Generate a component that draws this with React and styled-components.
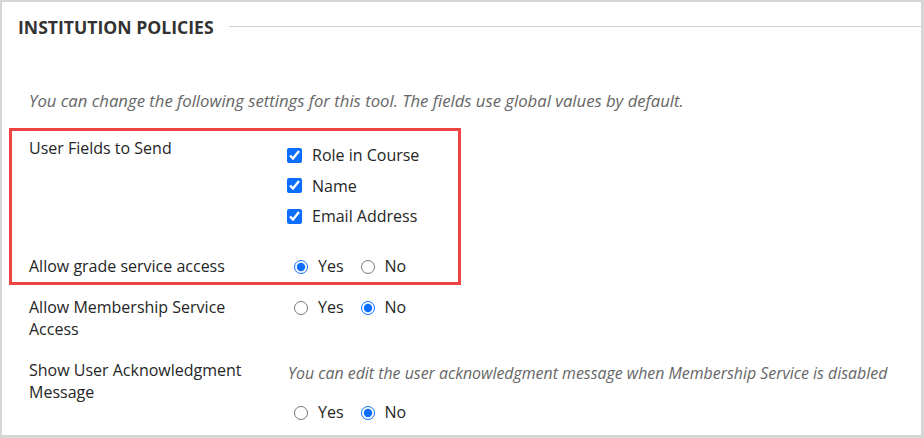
import React from "react";
import styled, { createGlobalStyle } from "styled-components";

const GlobalStyle = createGlobalStyle`
  html, body {
    margin: 0;
    padding: 0;
    background: #fff;
  }
  body {
    font-family: "Open Sans", "Noto Sans", sans-serif;
    color: #262626;
  }
`;

const Frame = styled.div`
  width: 924px;
  height: 438px;
  box-sizing: border-box;
  border: 2px solid #d6d6d6;
  border-bottom-width: 3px;
  border-right-width: 3px;
  overflow: hidden;
`;

const Header = styled.div`
  display: flex;
  align-items: center;
  padding: 13px 0 0 16px;
`;

const Title = styled.h2`
  margin: 0;
  font-size: 17.6px;
  line-height: 24px;
  font-weight: 700;
  color: #333;
`;

const Rule = styled.div`
  flex: 1;
  height: 1px;
  background: #cfcfcf;
  margin: -2px 0 0 15px;
`;

const Intro = styled.p`
  margin: 51px 0 0 27px;
  font-size: 16.7px;
  line-height: 22px;
  font-style: italic;
  color: #666;
  white-space: nowrap;
`;

const Highlight = styled.div`
  width: 452px;
  box-sizing: border-box;
  margin: 16px 0 0 7px;
  border: 3px solid #ef4444;
  padding: 6px 0 5px 17px;
`;

const Row = styled.div`
  display: grid;
  grid-template-columns: 258px 1fr;
  align-items: start;
  margin-top: ${(p) => p.$gap || 0}px;
  padding-left: ${(p) => p.$indent || 0}px;
`;

const Label = styled.div`
  font-size: 16px;
  line-height: 22px;
  color: #262626;
`;

const Controls = styled.div`
  display: flex;
  flex-direction: column;
  padding-top: ${(p) => p.$offset || 0}px;
`;

const Note = styled.div`
  font-size: 15.9px;
  line-height: 22px;
  font-style: italic;
  color: #666;
  white-space: nowrap;
  margin-top: 3px;
  margin-left: 1px;
`;

const CheckLine = styled.label`
  display: flex;
  align-items: center;
  height: 30.5px;
  font-size: 16px;
  color: #262626;
`;

const Check = styled.input.attrs({ type: "checkbox" })`
  width: 15px;
  height: 15px;
  margin: 0 10px 0 0;
  accent-color: #0d6efd;
`;

const RadioGroup = styled.div`
  display: flex;
  align-items: center;
  height: 22px;
  margin-top: ${(p) => p.$top || 0}px;
  padding-left: 7px;
`;

const RadioLine = styled.label`
  display: flex;
  align-items: center;
  font-size: 16px;
  color: #262626;
  margin-right: 17px;
`;

const Radio = styled.input.attrs({ type: "radio" })`
  width: 14px;
  height: 14px;
  margin: 3px 10px 0 0;
  accent-color: #0d6efd;
`;

function YesNo({ name, value, top }) {
  return (
    <RadioGroup $top={top}>
      <RadioLine>
        <Radio name={name} defaultChecked={value === "yes"} />
        Yes
      </RadioLine>
      <RadioLine>
        <Radio name={name} defaultChecked={value === "no"} />
        No
      </RadioLine>
    </RadioGroup>
  );
}

export default function App() {
  return (
    <>
      <GlobalStyle />
      <Frame>
        <Header>
          <Title>INSTITUTION POLICIES</Title>
          <Rule />
        </Header>
        <Intro>
          You can change the following settings for this tool. The fields use
          global values by default.
        </Intro>

        <Highlight>
          <Row>
            <Label>User Fields to Send</Label>
            <Controls $offset={3}>
              <CheckLine>
                <Check defaultChecked />
                Role in Course
              </CheckLine>
              <CheckLine>
                <Check defaultChecked />
                Name
              </CheckLine>
              <CheckLine>
                <Check defaultChecked />
                Email Address
              </CheckLine>
            </Controls>
          </Row>
          <Row $gap={23}>
            <Label>Allow grade service access</Label>
            <Controls>
              <YesNo name="grade" value="yes" />
            </Controls>
          </Row>
        </Highlight>

        <Row $indent={27} $gap={11}>
          <Label>
            Allow Membership Service
            <br />
            Access
          </Label>
          <Controls>
            <YesNo name="membership" value="no" />
          </Controls>
        </Row>

        <Row $indent={27} $gap={19}>
          <Label>
            Show User Acknowledgment
            <br />
            Message
          </Label>
          <Controls>
            <Note>
              You can edit the user acknowledgment message when Membership
              Service is disabled
            </Note>
            <YesNo name="ack" value="no" top={17} />
          </Controls>
        </Row>
      </Frame>
    </>
  );
}
